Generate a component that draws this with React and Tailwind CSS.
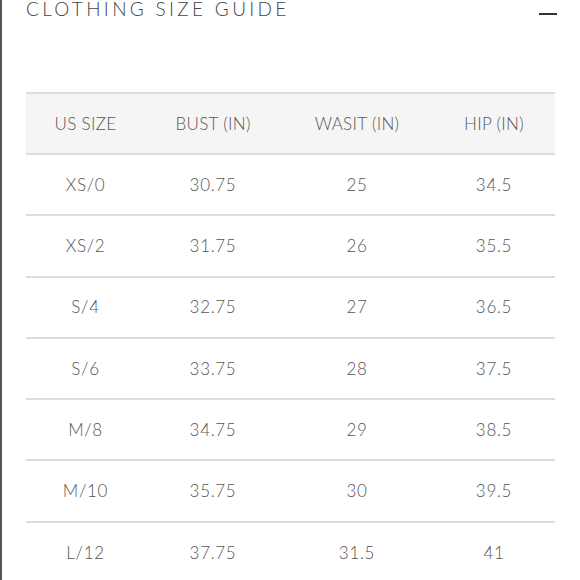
const ROWS = [
  ["XS/0", "30.75", "25", "34.5"],
  ["XS/2", "31.75", "26", "35.5"],
  ["S/4", "32.75", "27", "36.5"],
  ["S/6", "33.75", "28", "37.5"],
  ["M/8", "34.75", "29", "38.5"],
  ["M/10", "35.75", "30", "39.5"],
  ["L/12", "37.75", "31.5", "41"],
];

const HEADERS = ["US SIZE", "BUST (IN)", "WASIT (IN)", "HIP (IN)"];

export default function App() {
  return (
    <div
      className="h-[580px] w-[580px] overflow-hidden border-l-2 border-[#555] bg-white text-[#555]"
      style={{ fontFamily: "Lato, 'Open Sans', sans-serif" }}
    >
      <div className="flex items-start justify-between pl-[24px] pr-[23px]">
        <h1 className="-mt-[3px] text-[19px] font-light leading-[24px] tracking-[0.175em] text-[#444]">
          CLOTHING SIZE GUIDE
        </h1>
        <span className="mt-[13px] block h-[2px] w-[18px] bg-[#333]" />
      </div>

      <table className="ml-[24px] mt-[71px] w-[529px] border-collapse text-center text-[17px] font-light">
        <colgroup>
          <col className="w-[119px]" />
          <col className="w-[136px]" />
          <col className="w-[152px]" />
          <col className="w-[122px]" />
        </colgroup>
        <thead>
          <tr className="h-[61px] border-y-2 border-[#dcdcdc] bg-[#f5f5f5]">
            {HEADERS.map((h) => (
              <th key={h} className="font-light tracking-[0.02em]">
                {h}
              </th>
            ))}
          </tr>
        </thead>
        <tbody>
          {ROWS.map((row) => (
            <tr key={row[0]} className="h-[61.3px] border-b-2 border-[#dcdcdc]">
              {row.map((cell, i) => (
                <td key={i} className="tracking-[0.04em]">
                  {cell}
                </td>
              ))}
            </tr>
          ))}
        </tbody>
      </table>
    </div>
  );
}
